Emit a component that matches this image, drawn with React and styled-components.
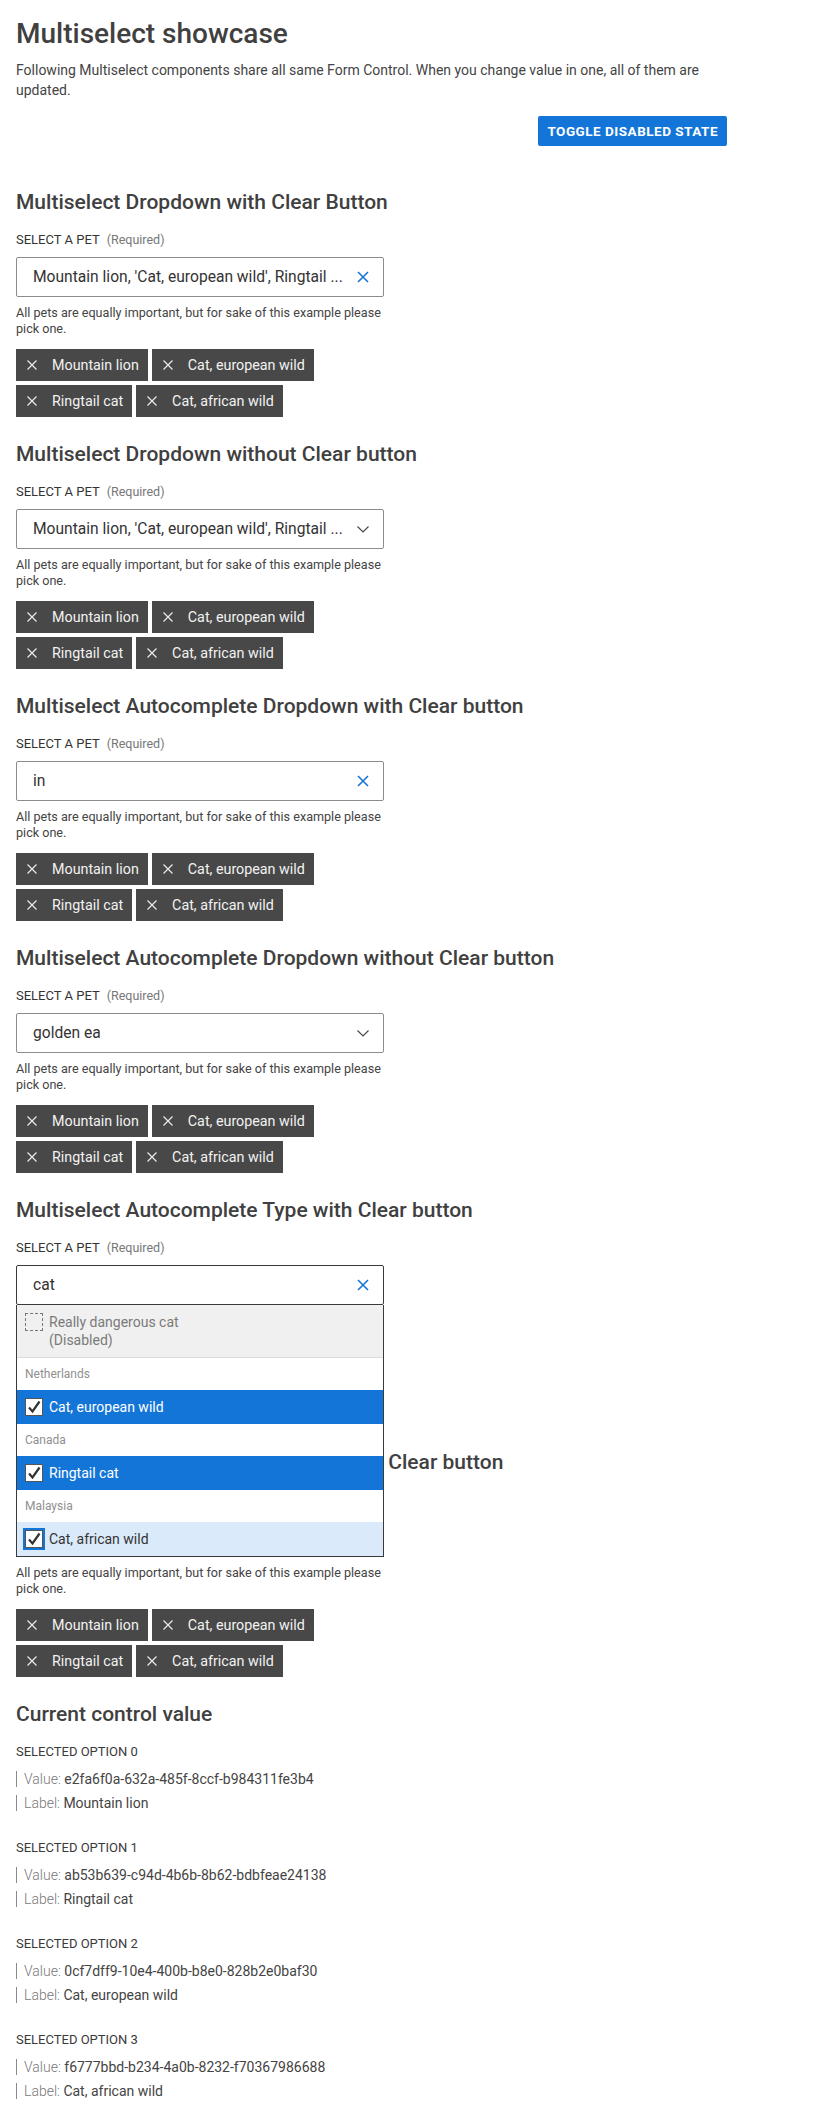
import React from 'react';
import styled, { createGlobalStyle, css } from 'styled-components';

const GlobalStyle = createGlobalStyle`
  body {
    margin: 0;
    background: #fff;
    font-family: Roboto, "Liberation Sans", sans-serif;
    color: #3c3c3c;
  }
  * { box-sizing: border-box; }
`;

const Page = styled.main`
  width: 727px;
  padding: 16px 0 0 16px;
`;

const Title = styled.h1`
  margin: 0;
  font-size: 28px;
  line-height: 36px;
  font-weight: 500;
  color: #404040;
`;

const Intro = styled.p`
  margin: 8px 0 0;
  font-size: 14px;
  line-height: 20px;
  color: #444;
`;

const Toolbar = styled.div`
  display: flex;
  justify-content: flex-end;
  margin: 16px 0 42px;
`;

const Button = styled.button`
  height: 30px;
  padding: 0 9px;
  border: 0;
  border-radius: 2px;
  background: #1375d8;
  color: #fff;
  font-family: inherit;
  font-size: 13.5px;
  font-weight: 700;
  letter-spacing: 0.5px;
  text-transform: uppercase;
  cursor: pointer;
`;

const Section = styled.section`
  padding-bottom: 23px;
`;

const SectionTitle = styled.h2`
  margin: 0;
  font-size: 21px;
  line-height: 28px;
  font-weight: 500;
  color: #404040;
  white-space: nowrap;
`;

const FieldLabel = styled.div`
  height: 20px;
  margin-top: 14px;
  font-size: 13px;
  line-height: 20px;
  text-transform: uppercase;
  color: #333;
`;

const Required = styled.span`
  margin-left: 7px;
  font-size: 12.5px;
  line-height: 1;
  text-transform: none;
  color: #777;
`;

const Field = styled.div`
  position: relative;
  width: 368px;
  margin-top: 7px;
`;

const InputBox = styled.div`
  display: flex;
  align-items: center;
  height: 40px;
  padding: 0 13px 0 16px;
  border: 1px solid ${({ $focused }) => ($focused ? '#3a3a3a' : '#8c8c8c')};
  border-radius: 2px;
  background: #fff;
`;

const InputText = styled.span`
  flex: 1;
  overflow: hidden;
  white-space: nowrap;
  font-size: 15.6px;
  color: #333;
`;

const IconSlot = styled.span`
  display: flex;
  align-items: center;
  justify-content: center;
  width: 14px;
  margin-left: 6px;
`;

const Hint = styled.div`
  width: 368px;
  margin-top: 8px;
  font-size: 12.6px;
  line-height: 16px;
  color: #444;
`;

const ChipList = styled.div`
  display: flex;
  flex-wrap: wrap;
  gap: 4px;
  width: 368px;
  margin-top: 12px;
`;

const Chip = styled.span`
  display: inline-flex;
  align-items: center;
  gap: 15px;
  height: 32px;
  padding: 0 9px 0 11px;
  background: #484848;
  color: #f2f2f2;
  font-size: 14.3px;
`;

const Dropdown = styled.div`
  position: absolute;
  top: 100%;
  left: 0;
  right: 0;
  z-index: 5;
  border: 1px solid #3a3a3a;
  border-top: 0;
  background: #fff;
`;

const optionTone = {
  disabled: css`
    align-items: flex-start;
    padding: 8px;
    background: #f0f0f0;
    color: #7a7a7a;
    border-bottom: 1px solid #dcdcdc;
    line-height: 18px;
  `,
  selected: css`
    background: #1375d8;
    color: #fff;
  `,
  active: css`
    background: #dbeafb;
    color: #333;
  `,
};

const Option = styled.div`
  display: flex;
  align-items: center;
  gap: 6px;
  min-height: 34px;
  padding: 0 8px;
  font-size: 14px;
  ${({ $tone }) => optionTone[$tone]}
`;

const GroupHeader = styled.div`
  height: 32px;
  padding: 0 8px;
  line-height: 32px;
  font-size: 12px;
  color: #8f8f8f;
`;

const Box = styled.span`
  flex: none;
  display: flex;
  align-items: center;
  justify-content: center;
  width: 18px;
  height: 18px;
  background: ${({ $disabled }) => ($disabled ? 'transparent' : '#fff')};
  border: 1px ${({ $disabled }) => ($disabled ? 'dashed #777' : 'solid #555')};
  outline: ${({ $focus }) => ($focus ? '2px solid #1375d8' : 'none')};
`;

const ValueTitle = styled(SectionTitle)``;

const OptionBlock = styled.div`
  margin-top: 14px;
  & + & { margin-top: 27px; }
`;

const OptionHead = styled.div`
  font-size: 13px;
  line-height: 20px;
  text-transform: uppercase;
  color: #3a3a3a;
`;

const Row = styled.div`
  margin-top: ${({ $first }) => ($first ? '9px' : '8px')};
  padding-left: 7px;
  border-left: 1px solid #8a8a8a;
  font-size: 14px;
  line-height: 16px;
  color: #444;
`;

const Key = styled.span`
  color: #777;
  font-weight: 300;
`;

const ClearIcon = () => (
  <svg width="12" height="12" viewBox="0 0 12 12">
    <path d="M1 1 L11 11 M11 1 L1 11" stroke="#1375d8" strokeWidth="1.6" fill="none" />
  </svg>
);

const ChevronIcon = () => (
  <svg width="12" height="7" viewBox="0 0 12 7">
    <path d="M0.5 0.5 L6 6 L11.5 0.5" stroke="#444" strokeWidth="1.1" fill="none" />
  </svg>
);

const ChipX = () => (
  <svg width="10" height="10" viewBox="0 0 10 10">
    <path d="M0.5 0.5 L9.5 9.5 M9.5 0.5 L0.5 9.5" stroke="#e8e8e8" strokeWidth="1.3" fill="none" />
  </svg>
);

const Check = () => (
  <svg width="14" height="14" viewBox="0 0 14 14">
    <path d="M2 7.5 L5.5 11.5 L12.5 1.5" stroke="#333" strokeWidth="2.2" fill="none" />
  </svg>
);

const summary = "Mountain lion, 'Cat, european wild', Ringtail ...";
const chips = ['Mountain lion', 'Cat, european wild', 'Ringtail cat', 'Cat, african wild'];

const sections = [
  { title: 'Multiselect Dropdown with Clear Button', value: summary, icon: 'clear' },
  { title: 'Multiselect Dropdown without Clear button', value: summary, icon: 'chevron' },
  { title: 'Multiselect Autocomplete Dropdown with Clear button', value: 'in', icon: 'clear' },
  { title: 'Multiselect Autocomplete Dropdown without Clear button', value: 'golden ea', icon: 'chevron' },
  { title: 'Multiselect Autocomplete Type with Clear button', value: 'cat', icon: 'clear', open: true },
  { title: 'Multiselect Autocomplete Type without Clear button', value: 'cat', icon: 'chevron' },
];

const selected = [
  { value: 'e2fa6f0a-632a-485f-8ccf-b984311fe3b4', label: 'Mountain lion' },
  { value: 'ab53b639-c94d-4b6b-8b62-bdbfeae24138', label: 'Ringtail cat' },
  { value: '0cf7dff9-10e4-400b-b8e0-828b2e0baf30', label: 'Cat, european wild' },
  { value: 'f6777bbd-b234-4a0b-8232-f70367986688', label: 'Cat, african wild' },
];

const PetMenu = () => (
  <Dropdown>
    <Option $tone="disabled">
      <Box $disabled />
      <span>Really dangerous cat<br />(Disabled)</span>
    </Option>
    <GroupHeader>Netherlands</GroupHeader>
    <Option $tone="selected">
      <Box><Check /></Box>
      Cat, european wild
    </Option>
    <GroupHeader>Canada</GroupHeader>
    <Option $tone="selected">
      <Box><Check /></Box>
      Ringtail cat
    </Option>
    <GroupHeader>Malaysia</GroupHeader>
    <Option $tone="active">
      <Box $focus><Check /></Box>
      Cat, african wild
    </Option>
  </Dropdown>
);

const PetSelect = ({ title, value, icon, open }) => (
  <Section>
    <SectionTitle>{title}</SectionTitle>
    <FieldLabel>
      Select a pet<Required>(Required)</Required>
    </FieldLabel>
    <Field>
      <InputBox $focused={open}>
        <InputText>{value}</InputText>
        <IconSlot>{icon === 'clear' ? <ClearIcon /> : <ChevronIcon />}</IconSlot>
      </InputBox>
      {open && <PetMenu />}
    </Field>
    <Hint>All pets are equally important, but for sake of this example please pick one.</Hint>
    <ChipList>
      {chips.map((c) => (
        <Chip key={c}>
          <ChipX />
          {c}
        </Chip>
      ))}
    </ChipList>
  </Section>
);

export default function App() {
  return (
    <Page>
      <GlobalStyle />
      <Title>Multiselect showcase</Title>
      <Intro>
        Following Multiselect components share all same Form Control. When you change value in one, all of them are updated.
      </Intro>
      <Toolbar>
        <Button>Toggle disabled state</Button>
      </Toolbar>
      {sections.map((s) => (
        <PetSelect key={s.title} {...s} />
      ))}
      <ValueTitle>Current control value</ValueTitle>
      {selected.map((o, i) => (
        <OptionBlock key={o.value}>
          <OptionHead>Selected option {i}</OptionHead>
          <Row $first><Key>Value: </Key>{o.value}</Row>
          <Row><Key>Label: </Key>{o.label}</Row>
        </OptionBlock>
      ))}
    </Page>
  );
}
